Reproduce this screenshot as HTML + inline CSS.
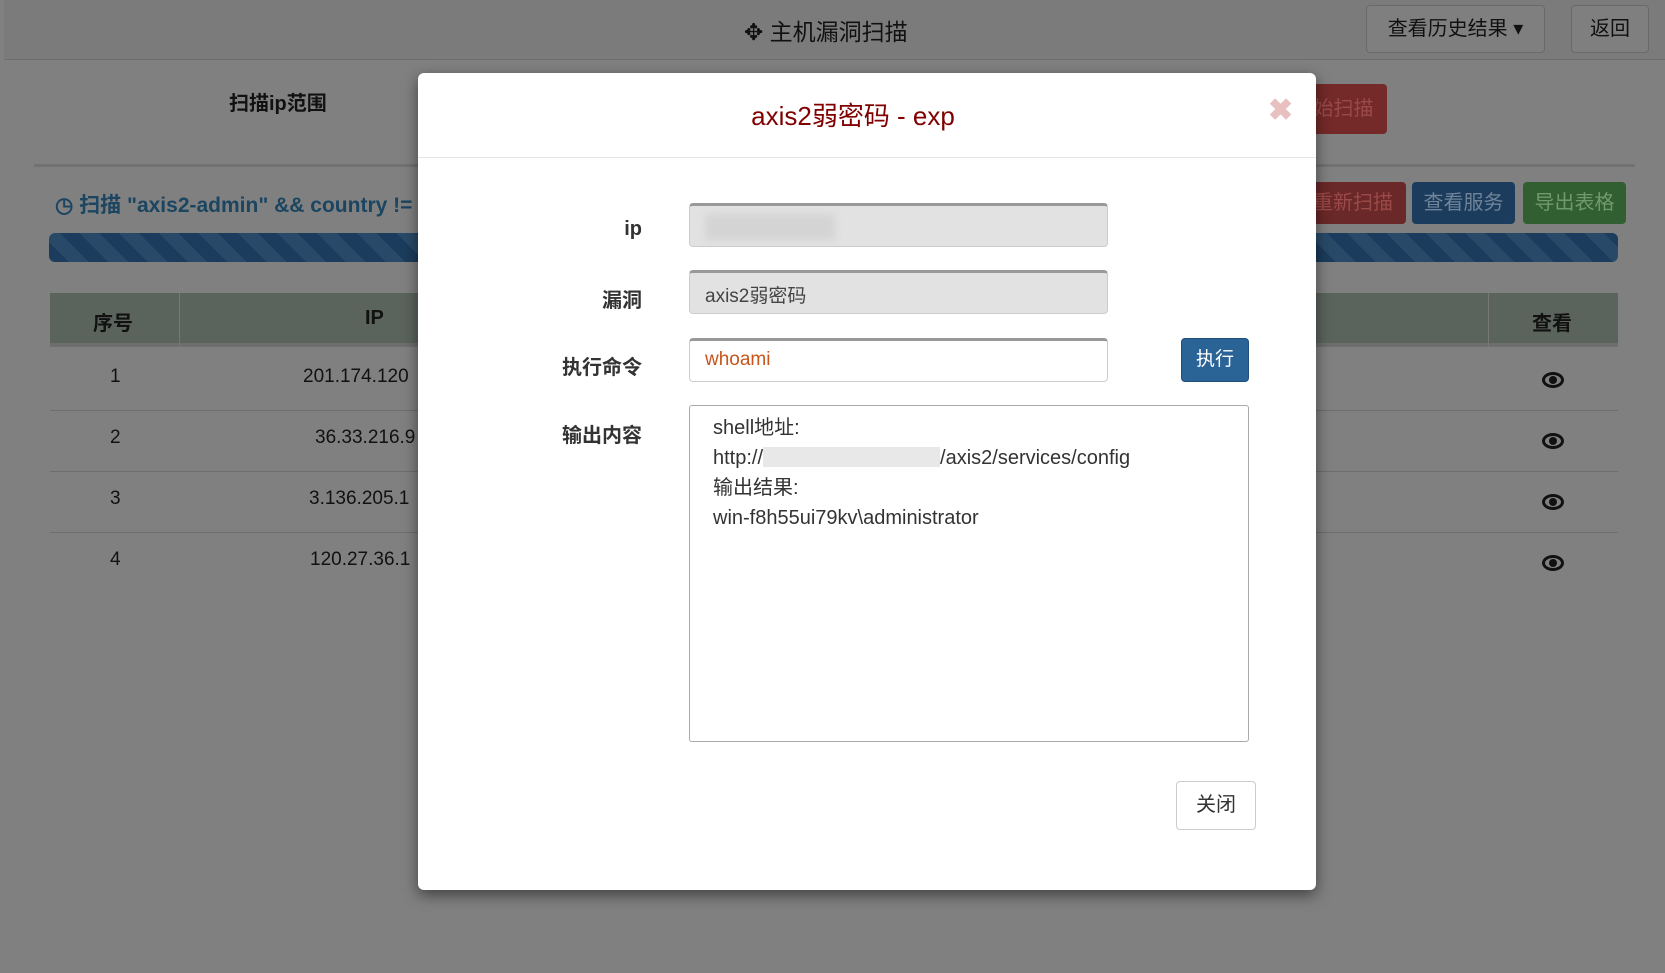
<!DOCTYPE html>
<html><head><meta charset="utf-8"><style>
*{box-sizing:border-box;margin:0;padding:0}
body{width:1665px;height:973px;overflow:hidden;background:#808080;font-family:"Liberation Sans","Noto Sans CJK SC",sans-serif;position:relative;color:#1a1a1a}
.a{position:absolute}
.hdr{left:4px;top:0;width:1661px;height:60px;background:#7b7b7b;border-bottom:1px solid #6e6e6e}
.btn{position:absolute;border-radius:4px;font-size:20px;text-align:center}
.gbtn{background:#7f7f7f;border:1px solid #6a6a6a;color:#111}
.tbl{left:50px;width:1568px}
.row{position:absolute;left:50px;width:1568px;height:61px;border-bottom:1px solid #6e6e6e;font-size:19px;color:#111}
.eye{position:absolute;left:1492px;top:22px;width:22px;height:16px;border:3px solid #111;border-radius:50%/50%}
.eye:after{content:"";position:absolute;left:4px;top:1px;width:8px;height:8px;background:#111;border-radius:50%}
.modal{left:418px;top:73px;width:898px;height:817px;background:#fff;border-radius:6px;box-shadow:0 5px 15px rgba(0,0,0,.5)}
.lbl{position:absolute;right:674px;font-size:20px;font-weight:bold;color:#333;text-align:right;white-space:nowrap}
.inp{position:absolute;left:271px;width:419px;height:44px;background:#e2e2e2;border:1px solid #ccc;border-top:3px solid #999;border-radius:4px;font-size:19px;padding:8px 15px;color:#444}
</style></head><body>
<div class="a hdr"></div>
<div class="a" style="left:744px;top:13px;font-size:23px;color:#111">✥ 主机漏洞扫描</div>
<div class="btn gbtn" style="left:1366px;top:5px;width:179px;height:48px;line-height:46px">查看历史结果 ▾</div>
<div class="btn gbtn" style="left:1571px;top:5px;width:78px;height:48px;line-height:46px">返回</div>
<div class="a" style="left:229px;top:87px;font-size:20px;font-weight:bold;color:#111">扫描ip范围</div>
<div class="btn" style="left:1300px;top:84px;width:87px;height:50px;background:#742a28;color:#9a4a48;line-height:50px">始扫描</div>
<div class="a" style="left:34px;top:164px;width:1601px;height:3px;background:#727272"></div>
<div class="a" style="left:55px;top:189px;font-size:21px;color:#1b4560;font-weight:bold">◷ 扫描 "axis2-admin" &amp;&amp; country !=</div>
<div class="btn" style="left:1300px;top:182px;width:106px;height:42px;line-height:42px;background:#6a2828;color:#9a4a48">重新扫描</div>
<div class="btn" style="left:1412px;top:182px;width:103px;height:42px;line-height:42px;background:#1b3c5c;color:#6f8399">查看服务</div>
<div class="btn" style="left:1523px;top:182px;width:103px;height:42px;line-height:42px;background:#315f31;color:#6f9a6f">导出表格</div>
<div class="a" style="left:49px;top:233px;width:1569px;height:29px;border-radius:6px;background:repeating-linear-gradient(45deg,#1b3c5c 0 14px,#284a68 14px 28px)"></div>
<div class="a tbl" style="top:293px;height:54px;background:#5b635d;border-bottom:4px solid #6e6e6e"></div>
<div class="a" style="left:179px;top:293px;width:1px;height:54px;background:#777"></div>
<div class="a" style="left:1488px;top:293px;width:1px;height:54px;background:#777"></div>
<div class="a" style="left:93px;top:307px;font-size:20px;font-weight:bold;color:#111">序号</div>
<div class="a" style="left:365px;top:307px;font-size:20px;font-weight:bold;color:#111">IP</div>
<div class="a" style="left:1532px;top:307px;font-size:20px;font-weight:bold;color:#111">查看</div>
<div class="row" style="top:350px"><span class="a" style="left:60px;top:16px">1</span><span class="a" style="left:253px;top:16px">201.174.120</span><div class="eye"></div></div>
<div class="row" style="top:411px"><span class="a" style="left:60px;top:16px">2</span><span class="a" style="left:265px;top:16px">36.33.216.9</span><div class="eye"></div></div>
<div class="row" style="top:472px"><span class="a" style="left:60px;top:16px">3</span><span class="a" style="left:259px;top:16px">3.136.205.1</span><div class="eye"></div></div>
<div class="row" style="top:533px;border:none"><span class="a" style="left:60px;top:16px">4</span><span class="a" style="left:260px;top:16px">120.27.36.1</span><div class="eye"></div></div>
<div class="a modal">
<div class="a" style="left:0;top:0;width:898px;height:85px;border-bottom:1px solid #e5e5e5"></div>
<div class="a" style="left:0;top:23px;width:870px;text-align:center;font-size:26px;color:#800000">axis2弱密码 - exp</div>
<div class="a" style="left:850px;top:20px;font-size:30px;color:#e8c0c0;font-weight:bold">✖</div>
<div class="lbl" style="top:145px">ip</div>
<div class="inp" style="top:130px"><span style="display:inline-block;width:130px;height:26px;background:#d4d4d4;filter:blur(4px)"></span></div>
<div class="lbl" style="top:211px">漏洞</div>
<div class="inp" style="top:197px">axis2弱密码</div>
<div class="lbl" style="top:278px">执行命令</div>
<div class="inp" style="top:265px;background:#fff;border:1px solid #ccc;border-top:3px solid #999;color:#c7541a">whoami</div>
<div class="btn" style="left:763px;top:265px;width:68px;height:44px;line-height:42px;background:#2a6396;border:1px solid #1f4f7a;color:#fff;font-size:19px">执行</div>
<div class="lbl" style="top:346px">输出内容</div>
<div class="a" style="left:271px;top:332px;width:560px;height:337px;border:1px solid #aaa;border-radius:3px;font-size:20px;line-height:30px;padding:7px 23px;color:#333">shell地址:<br>http://<span style="display:inline-block;width:177px;height:20px;background:#e8e8e8;vertical-align:-3px"></span>/axis2/services/config<br>输出结果:<br>win-f8h55ui79kv\administrator</div>
<div class="btn" style="left:758px;top:708px;width:80px;height:49px;line-height:47px;border:1px solid #ccc;color:#333">关闭</div>
</div>
</body></html>
